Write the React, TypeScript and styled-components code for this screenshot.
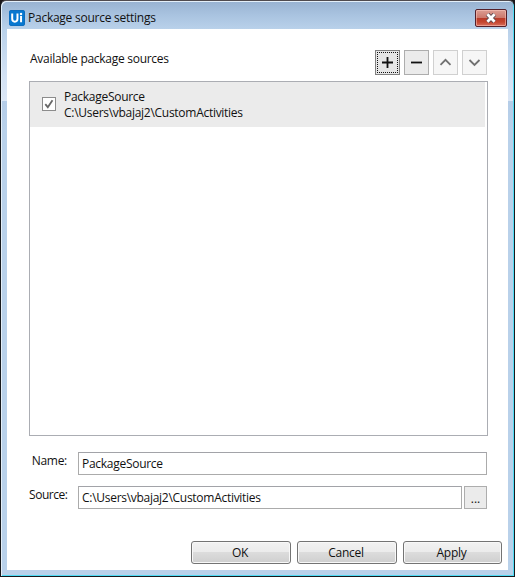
import React from "react";
import styled, { createGlobalStyle } from "styled-components";

const GlobalStyle = createGlobalStyle`
  * { box-sizing: border-box; }
  body { margin: 0; background: #1a1618; overflow: hidden; }
  button, input { font: inherit; color: inherit; margin: 0; }
`;

const Window = styled.div`
  width: 515px;
  height: 577px;
  display: flex;
  flex-direction: column;
  padding: 1px 5px 5px;
  border: 1px solid #17191d;
  border-top-color: #504b4f;
  border-radius: 6px 6px 0 0;
  background:
    linear-gradient(#98b2d1 0, #a9c3e0 14px, #b9d1ea 28px, #d3e2f4 75px, #dce7f6 100px, #b5cde8 100px, #b9d1ea 130px);
  box-shadow: inset 1px 1px 0 #e4eff9, inset -1px -1px 0 #4fdcf5;
  font-family: "Open Sans", "Noto Sans", sans-serif;
  font-size: 12px;
  line-height: 16px;
  color: #111;
`;

const TitleBar = styled.header`
  height: 27px;
  flex: none;
  display: flex;
  padding: 8px 2px 0 2px;
`;

const Logo = styled.svg`
  display: block;
  width: 16px;
  height: 16px;
  margin: 0 3px 0 1px;
`;

const Text = styled.span<{ $tracking?: number }>`
  white-space: pre;
  letter-spacing: ${(p) => p.$tracking ?? -0.28}px;
`;

const CloseButton = styled.button`
  width: 32px;
  height: 18px;
  margin: -1px 0 0 auto;
  padding: 0;
  border: 1px solid #54202a;
  border-radius: 2px;
  background: linear-gradient(#dc9d93 0, #cc796d 48%, #b83a29 50%, #c4452f 75%, #d8705e 100%);
  box-shadow: inset 0 0 0 1px rgba(255, 205, 195, 0.5);
  svg { display: block; margin: auto; }
`;

const Content = styled.main`
  width: 501px;
  height: 541px;
  display: flex;
  flex-direction: column;
  margin-left: 1px;
  padding: 21px 6px 6px 22px;
  background: #fff;
`;

const Heading = styled.div`
  height: 31px;
  display: flex;
  justify-content: space-between;
  padding: 0 15px 0 1px;
`;

const HeadingLabel = styled.div`
  padding-top: 1px;
`;

const Tools = styled.div`
  display: flex;
  gap: 4px;
`;

const ToolButton = styled.button<{ $focused?: boolean }>`
  width: 25px;
  height: 25px;
  padding: ${(p) => (p.$focused ? 1 : 3)}px;
  border: 1px solid ${(p) => (p.$focused ? "#808080" : "#adadad")};
  background: ${(p) => (p.$focused ? "#e6e6e6" : "#ebebeb")};
  svg { display: block; margin: auto; }
  &:disabled { border-color: #d0d0d0; background: #f6f6f6; }
`;

const SourceList = styled.div`
  width: 459px;
  height: 355px;
  flex: none;
  padding-right: 2px;
  border: 1px solid #abadb3;
`;

const SourceRow = styled.div`
  height: 45px;
  display: flex;
  align-items: center;
  gap: 8px;
  padding: 0 0 1px 12px;
  background: #ebebeb;
`;

const CheckBox = styled.span`
  width: 14px;
  height: 14px;
  border: 1px solid #8c8c8c;
  background: #fff;
  svg { display: block; }
`;

const SourceText = styled.div`
  display: flex;
  flex-direction: column;
  padding-top: 2px;
`;

const Field = styled.label`
  width: 458px;
  height: 23px;
  display: flex;
  margin-top: 11px;
`;

const FieldName = styled.span`
  width: 49px;
  flex: none;
  padding: 1px 11px 0 0;
  text-align: right;
`;

const Input = styled.div`
  flex: 1;
  padding: 3px 3px 0;
  border: 1px solid #ababab;
  border-top-color: #a2a3a8;
`;

const BrowseButton = styled.button`
  width: 23px;
  height: 23px;
  margin-left: 2px;
  padding: 2px 0 0;
  border: 1px solid #adadad;
  background: #ebebeb;
  line-height: 16px;
`;

const Fields = styled.section`
  display: flex;
  flex-direction: column;
  padding-top: 5px;
`;

const Actions = styled.footer`
  display: grid;
  grid-template-columns: 100px 100px 99px;
  justify-content: end;
  gap: 6px;
  margin-top: auto;
`;

const ActionButton = styled.button`
  height: 23px;
  padding: 0 2px 0 0;
  border: 1px solid #747474;
  border-radius: 3px;
  background: linear-gradient(#f2f2f2 0, #ebebeb 50%, #dcdcdc 50%, #cfcfcf 100%);
  box-shadow: inset 0 0 0 1px #f8f8f8;
  line-height: 16px;
`;

export default function App() {
  return (
    <>
      <GlobalStyle />
      <Window>
        <TitleBar>
          <Logo viewBox="0 0 17 17">
            <rect x=".5" y=".5" width="16" height="16" rx="1.5" fill="#0878d0" stroke="#086abd" />
            <path d="M3.4 3.6v5.8q0 3 2.8 3t2.8-3V3.6M12.8 6.5v6.6" fill="none" stroke="#fff" strokeWidth="2.1" />
            <circle cx="12.8" cy="4.2" r="1.3" fill="#fff" />
          </Logo>
          <Text $tracking={-0.25}>Package source settings</Text>
          <CloseButton aria-label="Close">
            <svg width="12" height="10" viewBox="0 0 12 10">
              <path d="M2.4 1.2 9.6 8.8M9.6 1.2 2.4 8.8" stroke="#594850" strokeWidth="4.4" />
              <path d="M2.4 1.2 9.6 8.8M9.6 1.2 2.4 8.8" stroke="#fff" strokeWidth="2.7" />
            </svg>
          </CloseButton>
        </TitleBar>
        <Content>
          <Heading>
            <HeadingLabel><Text>Available package sources</Text></HeadingLabel>
            <Tools>
              <ToolButton $focused aria-label="Add">
                <svg width="21" height="21" viewBox="0 0 21 21" fill="none" stroke="#111">
                  <path d="M0 .5H21M0 20.5H21M.5 2V20M20.5 2V20" strokeDasharray="1 1" />
                  <path d="M5 10.5h11M10.5 5v11" strokeWidth="1.8" />
                </svg>
              </ToolButton>
              <ToolButton aria-label="Remove">
                <svg width="17" height="17" viewBox="0 0 17 17">
                  <path d="M3 8.5h11" stroke="#111" strokeWidth="1.8" />
                </svg>
              </ToolButton>
              <ToolButton disabled aria-label="Move up">
                <svg width="17" height="17" viewBox="0 0 17 17">
                  <path d="m3.5 10.8 5-5 5 5" fill="none" stroke="#707070" strokeWidth="1.8" />
                </svg>
              </ToolButton>
              <ToolButton disabled aria-label="Move down">
                <svg width="17" height="17" viewBox="0 0 17 17">
                  <path d="m3.5 6 5 5 5-5" fill="none" stroke="#707070" strokeWidth="1.8" />
                </svg>
              </ToolButton>
            </Tools>
          </Heading>
          <SourceList>
            <SourceRow>
              <CheckBox role="checkbox" aria-checked="true">
                <svg width="12" height="12" viewBox="0 0 12 12">
                  <path d="m2.3 6.2 2.5 3 4.7-7" fill="none" stroke="#686868" strokeWidth="1.8" />
                </svg>
              </CheckBox>
              <SourceText>
                <Text>PackageSource</Text>
                <Text>C:\Users\vbajaj2\CustomActivities</Text>
              </SourceText>
            </SourceRow>
          </SourceList>
          <Fields>
            <Field>
              <FieldName><Text>Name:</Text></FieldName>
              <Input><Text>PackageSource</Text></Input>
            </Field>
            <Field>
              <FieldName><Text $tracking={-0.45}>Source:</Text></FieldName>
              <Input><Text>C:\Users\vbajaj2\CustomActivities</Text></Input>
              <BrowseButton aria-label="Browse"><Text $tracking={0}>...</Text></BrowseButton>
            </Field>
          </Fields>
          <Actions>
            <ActionButton><Text>OK</Text></ActionButton>
            <ActionButton><Text>Cancel</Text></ActionButton>
            <ActionButton><Text>Apply</Text></ActionButton>
          </Actions>
        </Content>
      </Window>
    </>
  );
}
